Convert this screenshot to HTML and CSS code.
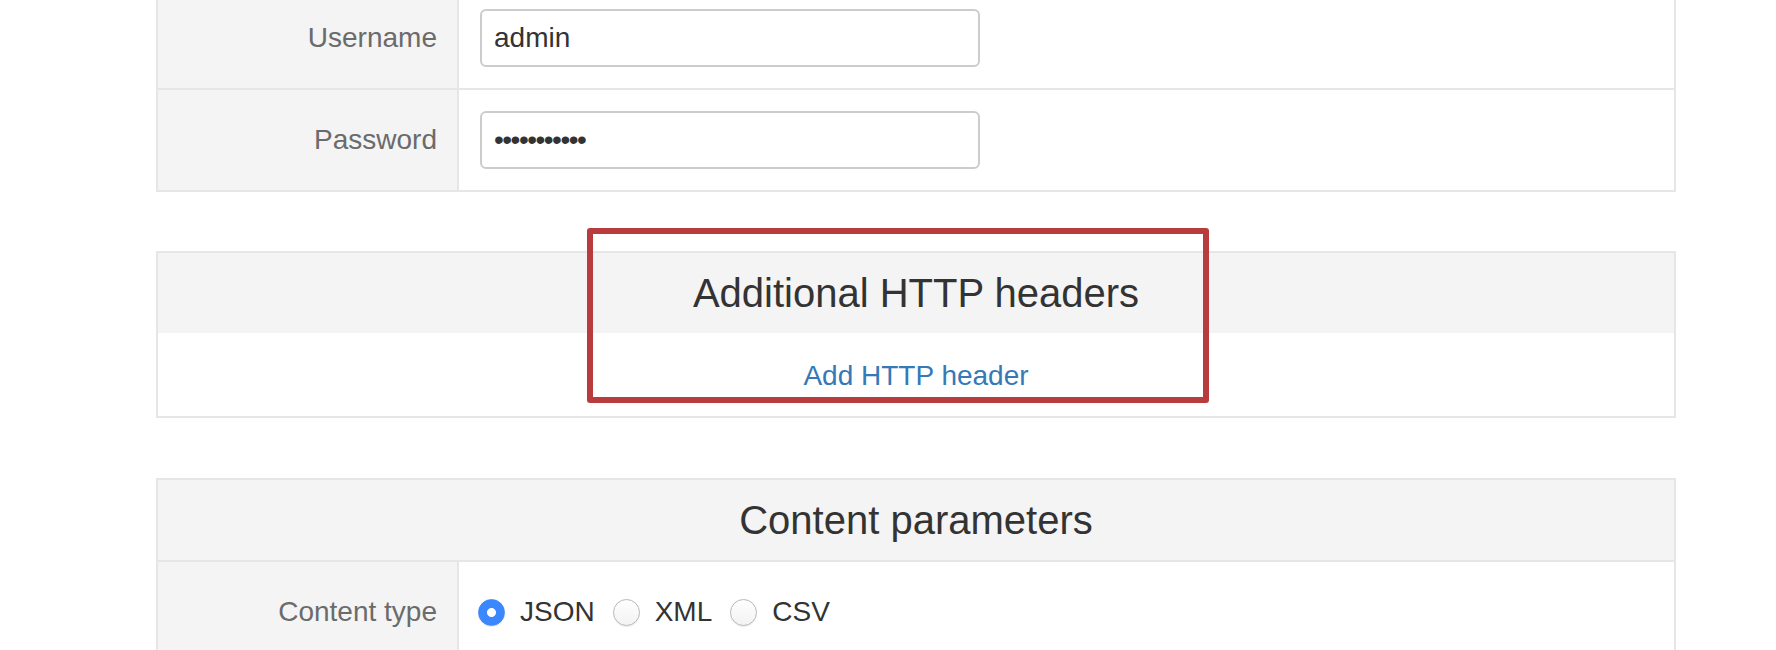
FILE: index.html
```html
<!DOCTYPE html>
<html lang="en">
<head>
  <meta charset="UTF-8" />
  <title>Connection settings</title>
  <meta name="viewport" content="width=device-width, initial-scale=1.0" />
  <link rel="stylesheet" href="styles.css">
</head>
<body>

  <!-- Authentication -->
  <div class="panel panel-top">
    <div class="row">
      <div class="label">Username</div>
      <div class="value">
        <input type="text" class="field" value="admin" />
      </div>
    </div>
    <div class="row">
      <div class="label">Password</div>
      <div class="value">
        <input type="password" class="field secret" value="secretpass1" />
      </div>
    </div>
  </div>

  <!-- Additional HTTP headers -->
  <div class="panel panel-headers">
    <div class="panel-title plain">Additional HTTP headers</div>
    <div class="panel-body">
      <a href="#" class="add-link">Add HTTP header</a>
    </div>
    <div class="highlight"></div>
  </div>

  <!-- Content parameters -->
  <div class="panel panel-content">
    <div class="panel-title">Content parameters</div>
    <div class="row">
      <div class="label">Content type</div>
      <div class="value">
        <label class="choice"><input type="radio" name="ctype" checked /> JSON</label>
        <label class="choice"><input type="radio" name="ctype" /> XML</label>
        <label class="choice"><input type="radio" name="ctype" /> CSV</label>
      </div>
    </div>
  </div>

</body>
</html>
```

FILE: styles.css
```css
* { box-sizing: border-box; }

body {
  margin: 0;
  padding: 0;
  background-color: white;
  color: #333;
  font-family: 'Liberation Sans', Arial, sans-serif;
  font-size: 28px;
}

.panel {
  position: relative;
  width: 1520px;
  margin: 59px 0 0 156px;
  border: 2px solid #e6e6e6;
}

.panel-top {
  margin-top: -14px;
}

.panel-content {
  margin-top: 60px;
}

.panel-title {
  height: 82px;
  display: flex;
  align-items: center;
  justify-content: center;
  background-color: #f4f4f4;
  font-size: 40px;
  color: #333;
  border-bottom: 2px solid #e6e6e6;
}

.panel-title.plain {
  height: 80px;
  border-bottom: none;
}

.panel-body {
  height: 83px;
  display: flex;
  align-items: center;
  justify-content: center;
  padding-top: 3px;
}

.add-link {
  color: #337ab7;
  text-decoration: none;
}

.row {
  display: grid;
  grid-template-columns: 301px 1fr;
}

.row + .row {
  border-top: 2px solid #e6e6e6;
}

.label {
  display: flex;
  align-items: center;
  justify-content: flex-end;
  padding-right: 20px;
  background-color: #f4f4f4;
  border-right: 2px solid #e6e6e6;
  color: #6b6b6b;
}

.value {
  display: flex;
  align-items: center;
  padding: 21px 21px;
  min-height: 100px;
}

.field {
  width: 500px;
  height: 58px;
  padding: 0 12px;
  border: 2px solid #ccc;
  border-radius: 6px;
  font-family: 'Liberation Sans', Arial, sans-serif;
  font-size: 28px;
  color: #333;
  outline: none;
}

.field.secret {
  letter-spacing: -1.5px;
}

.choice {
  display: flex;
  align-items: center;
  margin-right: 20px;
  color: #333;
}

.choice input {
  appearance: none;
  -webkit-appearance: none;
  width: 27px;
  height: 27px;
  margin: 0 15px 0 -2px;
  border-radius: 50%;
  border: 1px solid #b8b8b8;
  background: linear-gradient(#ffffff, #f2f2f2);
  box-shadow: 0 1px 1px rgba(0, 0, 0, 0.08);
}

.choice input:checked {
  border-color: #3b87fd;
  background: radial-gradient(circle, #ffffff 0, #ffffff 4px, #3b87fd 5px);
}

/* annotation box over the headers panel */
.highlight {
  position: absolute;
  left: 429px;
  top: -25px;
  width: 622px;
  height: 175px;
  border: 6px solid #b83b3e;
  border-radius: 3px;
  pointer-events: none;
}
```
